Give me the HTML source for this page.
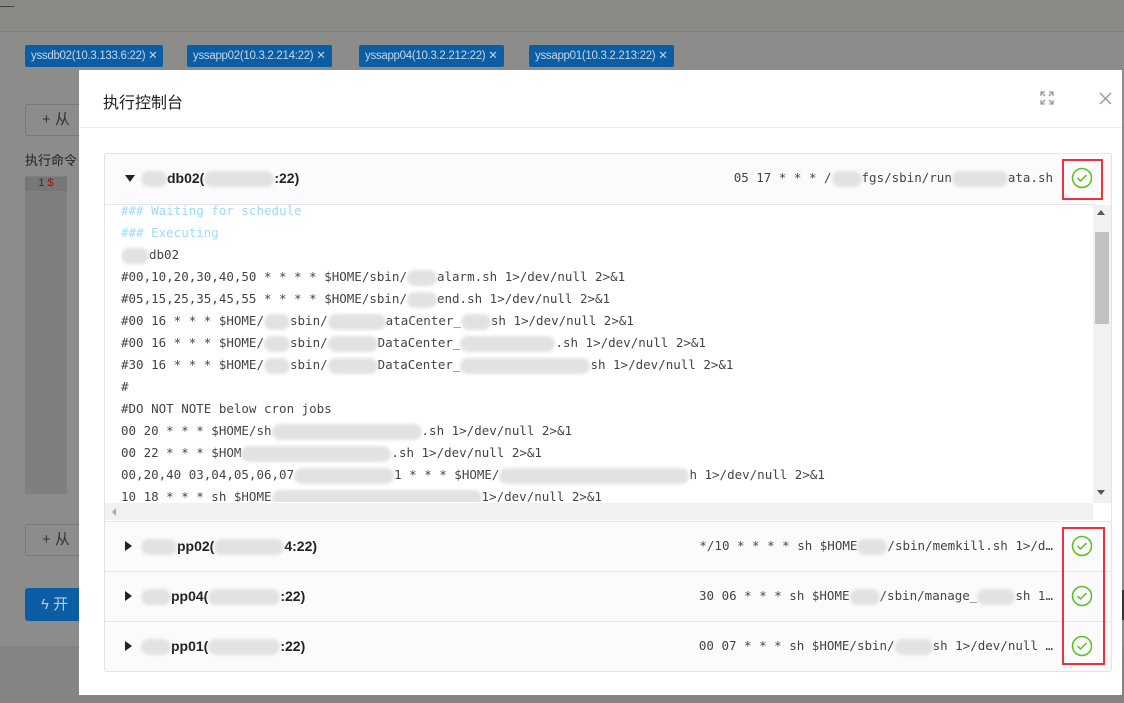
<!DOCTYPE html><html style="background:#8c8d8b"><head><meta charset="utf-8"><style>
html,body{margin:0;width:1124px;height:703px;overflow:hidden;background:#8c8d8b}
body{font-family:"Liberation Sans","Noto Sans CJK SC",sans-serif;position:relative}
.abs{position:absolute}
.tag{position:absolute;top:45px;height:22px;background:#0b5ea4;color:#c3d6ea;font-size:11.5px;line-height:22px;padding:0 6px;border-radius:2px;white-space:nowrap;letter-spacing:-0.3px}
.modal{left:79px;top:70px;width:1043px;height:625px;background:#fff}
.mono{font-family:"DejaVu Sans Mono","Liberation Mono",monospace;font-size:12.5px;color:#444}
.blur{display:inline-block;background:#e2e2e2;border-radius:8px;height:16px;vertical-align:middle;filter:blur(1.5px)}
.row{position:absolute;left:0;width:1006px;height:49px;background:#fdfafd;border-top:1px solid #e6e6e6}
.host{position:absolute;left:36px;top:16px;font-weight:bold;font-size:14px;color:#222}
.tri{position:absolute;left:20px;top:19px;width:0;height:0;border-top:5px solid transparent;border-bottom:5px solid transparent;border-left:7px solid #222}
.cmd{position:absolute;right:58px;top:16px;white-space:nowrap}
.ok{position:absolute;right:18px;top:13px}
.log div{height:22px;line-height:22px;white-space:pre}
</style></head><body>
<div class="abs" style="left:0;top:0;width:1124px;height:703px;background:#8c8d8b"></div>
<div class="abs" style="left:0;top:0;width:1124px;height:31px;background:#888a86;border-bottom:1px solid #7f817e"></div>
<div class="abs" style="left:0;top:6px;width:14px;height:1px;background:#444"></div>
<div class="tag" style="left:25px">yssdb02(10.3.133.6:22) ✕</div>
<div class="tag" style="left:187px">yssapp02(10.3.2.214:22) ✕</div>
<div class="tag" style="left:359px">yssapp04(10.3.2.212:22) ✕</div>
<div class="tag" style="left:529px">yssapp01(10.3.2.213:22) ✕</div>
<div class="abs" style="left:25px;top:104px;width:70px;height:30px;border:1px solid #777;border-radius:3px;color:#333;font-size:15px;line-height:30px;padding-left:16px">+ 从</div>
<div class="abs" style="left:25px;top:150px;font-size:13px;color:#222">执行命令</div>
<div class="abs" style="left:25px;top:176px;width:42px;height:318px;background:#7f807e"></div>
<div class="abs" style="left:25px;top:177px;width:42px;height:14px;background:#777;color:#333;font-size:11px;text-align:center">1 <span style="color:#8b1a1a">$</span></div>
<div class="abs" style="left:25px;top:524px;width:70px;height:30px;border:1px solid #777;border-radius:3px;color:#333;font-size:15px;line-height:30px;padding-left:16px">+ 从</div>
<div class="abs" style="left:25px;top:588px;width:70px;height:33px;background:#0b5ea4;border-radius:3px;color:#b8cde0;font-size:15px;line-height:33px;padding-left:16px">ϟ 开</div>
<div class="abs" style="left:0;top:646px;width:1124px;height:57px;background:#848583"></div>
<div class="abs" style="left:1119px;top:590px;width:5px;height:30px;background:#333"></div>

<div class="abs modal">
 <div class="abs" style="left:24px;top:19px;font-size:16px;color:#222">执行控制台</div>
 <svg class="abs" style="left:961px;top:21px" width="14" height="14" viewBox="0 0 14 14" fill="none" stroke="#999" stroke-width="1.3"><path d="M1 5V1h4M9 1h4v4M13 9v4H9M5 13H1V9M1 1l4 4M13 1L9 5M13 13L9 9M1 13l4-4"/></svg>
 <svg class="abs" style="left:1020px;top:22px" width="13" height="13" viewBox="0 0 13 13" stroke="#999" stroke-width="1.4"><path d="M1 1l11 11M12 1L1 12"/></svg>
 <div class="abs" style="left:0;top:57px;width:1043px;height:1px;background:#eee"></div>
 <div class="abs" style="left:25px;top:83px;width:1006px;height:517px;border:1px solid #e3e3e3;border-radius:3px;background:#fff;overflow:hidden">
  <div class="row" style="top:0;border-top:none">
   <div class="tri" style="left:20px;top:21px;border-left:5px solid transparent;border-right:5px solid transparent;border-top:7px solid #222;border-bottom:none"></div>
   <div class="host"><span class="blur" style="width:26px"></span>db02(<span class="blur" style="width:70px"></span>:22)</div>
   <div class="cmd mono">05 17 * * * /<span class="blur" style="width:30px"></span>fgs/sbin/run<span class="blur" style="width:56px"></span>ata.sh</div>
   <svg class="ok" width="22" height="22" viewBox="0 0 22 22" fill="none" stroke="#52c41a" stroke-width="1.5"><circle cx="11" cy="11" r="9.5"/><path d="M6.5 11l3 3 6-6"/></svg>
  </div>
  <div class="abs" style="left:0;top:50px;width:990px;height:300px;border-top:1px solid #e6e6e6"></div>
  <div class="abs mono log" style="left:16px;top:46px;width:970px;height:302px;overflow:hidden">
   <div style="color:#9fdaf8">### Waiting for schedule</div>
   <div style="color:#9fdaf8">### Executing</div>
   <div><span class="blur" style="width:28px"></span>db02</div>
   <div>#00,10,20,30,40,50 * * * * $HOME/sbin/<span class="blur" style="width:30px"></span>alarm.sh 1&gt;/dev/null 2&gt;&amp;1</div>
   <div>#05,15,25,35,45,55 * * * * $HOME/sbin/<span class="blur" style="width:30px"></span>end.sh 1&gt;/dev/null 2&gt;&amp;1</div>
   <div>#00 16 * * * $HOME/<span class="blur" style="width:26px"></span>sbin/<span class="blur" style="width:58px"></span>ataCenter_<span class="blur" style="width:30px"></span>sh 1&gt;/dev/null 2&gt;&amp;1</div>
   <div>#00 16 * * * $HOME/<span class="blur" style="width:26px"></span>sbin/<span class="blur" style="width:50px"></span>DataCenter_<span class="blur" style="width:95px"></span>.sh 1&gt;/dev/null 2&gt;&amp;1</div>
   <div>#30 16 * * * $HOME/<span class="blur" style="width:26px"></span>sbin/<span class="blur" style="width:50px"></span>DataCenter_<span class="blur" style="width:130px"></span>sh 1&gt;/dev/null 2&gt;&amp;1</div>
   <div>#</div>
   <div>#DO NOT NOTE below cron jobs</div>
   <div>00 20 * * * $HOME/sh<span class="blur" style="width:150px"></span>.sh 1&gt;/dev/null 2&gt;&amp;1</div>
   <div>00 22 * * * $HOM<span class="blur" style="width:150px"></span>.sh 1&gt;/dev/null 2&gt;&amp;1</div>
   <div>00,20,40 03,04,05,06,07<span class="blur" style="width:100px"></span>1 * * * $HOME/<span class="blur" style="width:190px"></span>h 1&gt;/dev/null 2&gt;&amp;1</div>
   <div>10 18 * * * sh $HOME<span class="blur" style="width:210px"></span>1&gt;/dev/null 2&gt;&amp;1</div>
  </div>
  <div class="abs" style="left:988px;top:51px;width:18px;height:298px;background:#f1f1f1"></div>
  <div class="abs" style="left:992px;top:56px;width:0;height:0;border-left:4px solid transparent;border-right:4px solid transparent;border-bottom:5px solid #555"></div>
  <div class="abs" style="left:990px;top:78px;width:14px;height:92px;background:#c1c1c1"></div>
  <div class="abs" style="left:992px;top:336px;width:0;height:0;border-left:4px solid transparent;border-right:4px solid transparent;border-top:5px solid #555"></div>
  <div class="abs" style="left:0;top:349px;width:988px;height:17px;background:#f1f1f1"></div>
  <div class="abs" style="left:7px;top:354px;width:0;height:0;border-top:4px solid transparent;border-bottom:4px solid transparent;border-right:4px solid #aaa"></div>

  <div class="row" style="top:367px"><div class="tri"></div><div class="host"><span class="blur" style="width:36px"></span>pp02(<span class="blur" style="width:70px"></span>4:22)</div><div class="cmd mono">*/10 * * * * sh $HOME<span class="blur" style="width:30px"></span>/sbin/memkill.sh 1&gt;/d…</div><svg class="ok" width="22" height="22" viewBox="0 0 22 22" fill="none" stroke="#52c41a" stroke-width="1.5"><circle cx="11" cy="11" r="9.5"/><path d="M6.5 11l3 3 6-6"/></svg></div>
  <div class="row" style="top:417px"><div class="tri"></div><div class="host"><span class="blur" style="width:30px"></span>pp04(<span class="blur" style="width:72px"></span>:22)</div><div class="cmd mono">30 06 * * * sh $HOME<span class="blur" style="width:30px"></span>/sbin/manage_<span class="blur" style="width:38px"></span>sh 1…</div><svg class="ok" width="22" height="22" viewBox="0 0 22 22" fill="none" stroke="#52c41a" stroke-width="1.5"><circle cx="11" cy="11" r="9.5"/><path d="M6.5 11l3 3 6-6"/></svg></div>
  <div class="row" style="top:467px"><div class="tri"></div><div class="host"><span class="blur" style="width:30px"></span>pp01(<span class="blur" style="width:72px"></span>:22)</div><div class="cmd mono">00 07 * * * sh $HOME/sbin/<span class="blur" style="width:38px"></span>sh 1&gt;/dev/null …</div><svg class="ok" width="22" height="22" viewBox="0 0 22 22" fill="none" stroke="#52c41a" stroke-width="1.5"><circle cx="11" cy="11" r="9.5"/><path d="M6.5 11l3 3 6-6"/></svg></div>
 </div>
</div>
<div class="abs" style="left:1062px;top:159px;width:37px;height:37px;border:2px solid #e8333a"></div>
<div class="abs" style="left:1062px;top:527px;width:39px;height:134px;border:2px solid #e8333a"></div>
</body></html>
